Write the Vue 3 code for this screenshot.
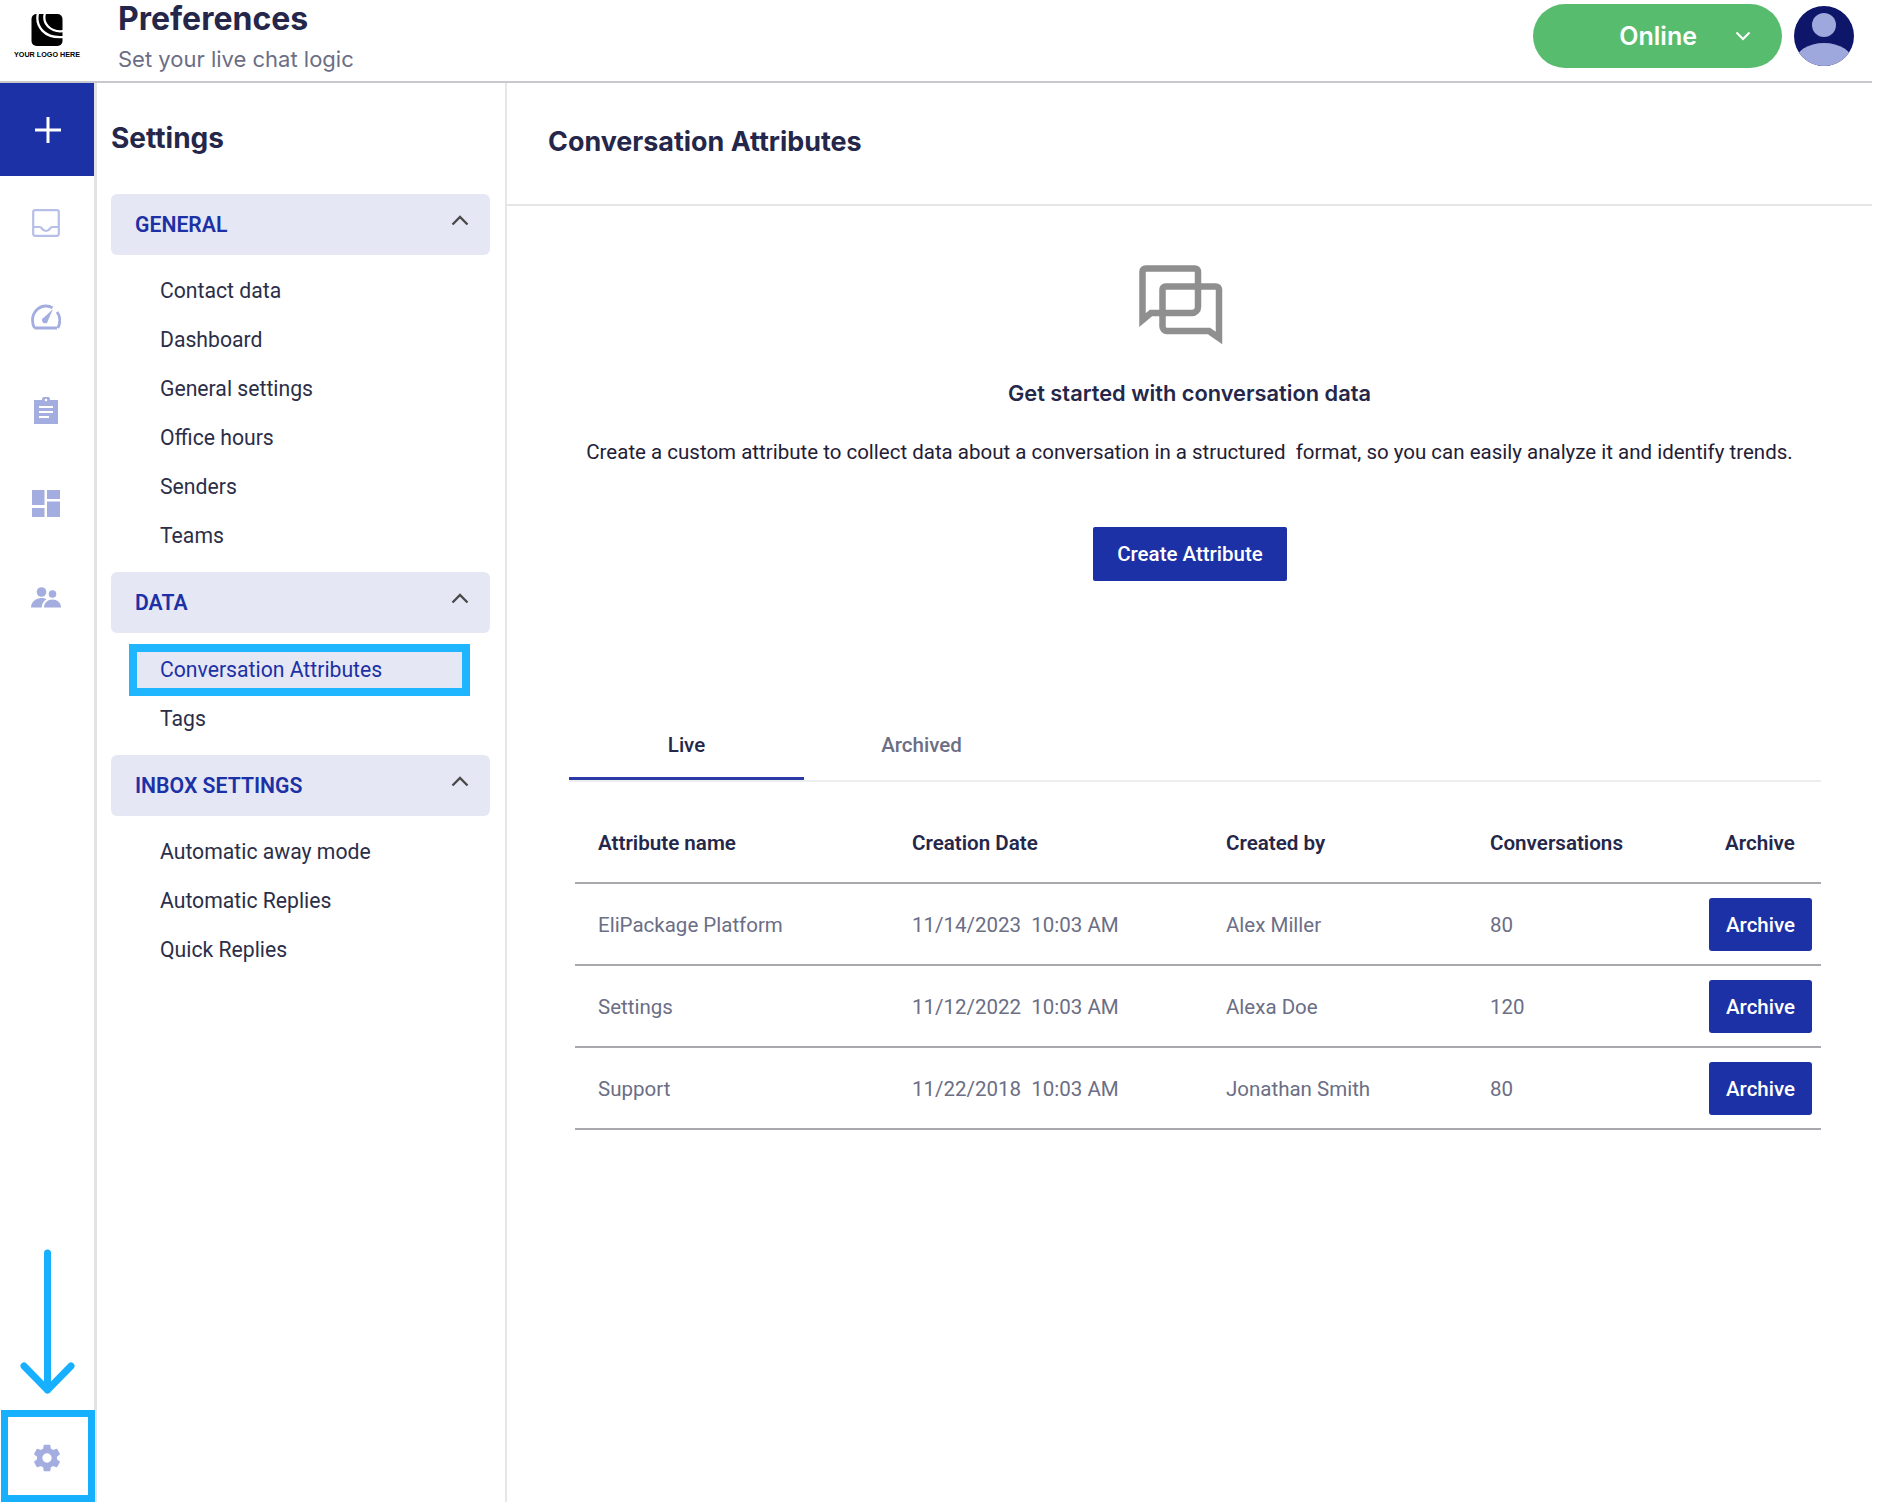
<script setup>
const railIcons = ['inbox', 'gauge', 'clip', 'dash', 'people']
const groups = [
  { title: 'GENERAL', items: ['Contact data', 'Dashboard', 'General settings', 'Office hours', 'Senders', 'Teams'] },
  { title: 'DATA', items: ['Conversation Attributes', 'Tags'] },
  { title: 'INBOX SETTINGS', items: ['Automatic away mode', 'Automatic Replies', 'Quick Replies'] }
]
const rows = [
  ['EliPackage Platform', '11/14/2023  10:03 AM', 'Alex Miller', '80'],
  ['Settings', '11/12/2022  10:03 AM', 'Alexa Doe', '120'],
  ['Support', '11/22/2018  10:03 AM', 'Jonathan Smith', '80']
]
</script>

<template>
  <div class="page">
    <header class="top">
      <div class="logo">
        <svg width="32" height="32" viewBox="0 0 32 32">
          <rect x="0.500" y="0" width="31" height="32" rx="5" fill="#000" />
          <path d="M7 -1 C4 12 13 25 33 23" fill="none" stroke="#fff" stroke-width="2.300" />
          <path d="M14 -1 C11 9 19 19 33 17" fill="none" stroke="#fff" stroke-width="2.300" />
        </svg>
        <span>YOUR LOGO HERE</span>
      </div>
      <div class="head-text">
        <h1>Preferences</h1>
        <p>Set your live chat logic</p>
      </div>
      <div class="status">
        <span>Online</span>
        <svg width="16" height="10" viewBox="0 0 16 10"><path d="M1.500 1.500 8 8l6.500-6.500" fill="none" stroke="#fff" stroke-width="2" /></svg>
      </div>
      <svg class="avatar" width="60" height="60" viewBox="0 0 60 60">
        <defs><clipPath id="av"><circle cx="30" cy="30" r="30" /></clipPath></defs>
        <g clip-path="url(#av)">
          <rect width="60" height="60" fill="#0d1669" />
          <circle cx="30" cy="19" r="12" fill="#9fa8dc" />
          <ellipse cx="30" cy="56" rx="29" ry="19" fill="#9fa8dc" />
        </g>
      </svg>
    </header>

    <div class="body">
      <nav class="rail">
        <button class="add" aria-label="Add">
          <svg width="28" height="28" viewBox="0 0 28 28"><path d="M14 1v26M1 14h26" stroke="#fff" stroke-width="3" /></svg>
        </button>
        <div v-for="i in railIcons" :key="i" class="rail-item">
          <svg v-if="i === 'inbox'" width="28" height="28" viewBox="0 0 28 28">
            <rect x="1.200" y="1.200" width="25.600" height="25.600" rx="2" fill="none" stroke="#b7bee8" stroke-width="2.200" />
            <path d="M2 18h6c2 0 2 4 6 4s4-4 6-4h6" fill="none" stroke="#b7bee8" stroke-width="2.200" />
          </svg>
          <svg v-else-if="i === 'gauge'" width="30" height="26" viewBox="0 0 30 26">
            <path d="M3.500 24C1.500 21 1.500 18 1.500 16 1.500 8 8 2 15 2c3 0 5 .8 6.500 1.800M26 8c2 2.500 2.800 5 2.800 8 0 3-.8 6-2 8M3.500 24H26" fill="none" stroke="#a4addf" stroke-width="2.800" />
            <path d="M22 5 17 16.500a3 3 0 1 1-4-3z" fill="#a4addf" />
          </svg>
          <svg v-else-if="i === 'clip'" width="24" height="27" viewBox="0 0 24 27">
            <path d="M0 3h8a4 4 0 0 1 8 0h8v24H0z" fill="#a4addf" />
            <path d="M5 10h14M5 15h14M5 20h10" stroke="#fff" stroke-width="2.200" />
            <circle cx="12" cy="3" r="1.300" fill="#fff" />
          </svg>
          <svg v-else-if="i === 'dash'" width="28" height="27" viewBox="0 0 28 27">
            <path d="M0 0h12.500v15H0zM15 0h13v9H15zM15 11.500h13V27H15zM0 18h12.500v9H0z" fill="#a4addf" />
          </svg>
          <svg v-else width="30" height="21" viewBox="0 0 30 21">
            <circle cx="10.500" cy="5" r="4.800" fill="#a4addf" />
            <circle cx="21.500" cy="7" r="3.800" fill="#a4addf" />
            <path d="M0 20.500C0 15 5 11 10.500 11c1.800 0 3.500.5 5 1.300-3 1.800-4.800 4.800-4.800 8.200z" fill="#a4addf" />
            <path d="M13 20.500c0-5 4-8 8.500-8s8.500 3 8.500 8z" fill="#a4addf" />
          </svg>
        </div>
        <div class="rail-space"></div>
        <svg class="arrow" width="60" height="146" viewBox="0 0 60 146">
          <path d="M29.500 4v137M6 117l23.500 24L53 117" fill="none" stroke="#17b0ff" stroke-width="7" stroke-linecap="round" stroke-linejoin="round" />
        </svg>
        <div class="gear-box">
          <svg width="32" height="32" viewBox="0 0 24 24">
            <path fill="#a4addf" d="M19.430 12.980c.04-.32.070-.64.070-.98s-.03-.66-.07-.98l2.110-1.650a.5.5 0 0 0 .12-.64l-2-3.460a.5.5 0 0 0-.61-.22l-2.490 1a7.300 7.300 0 0 0-1.690-.98l-.38-2.650A.49.49 0 0 0 14 2h-4a.49.49 0 0 0-.49.420l-.38 2.650c-.61.250-1.170.590-1.690.98l-2.490-1a.49.49 0 0 0-.61.220l-2 3.460a.49.49 0 0 0 .12.640l2.110 1.650c-.04.320-.07.650-.07.980s.03.660.07.980l-2.110 1.650a.5.5 0 0 0-.12.640l2 3.460c.12.220.39.300.61.220l2.490-1c.52.400 1.080.730 1.690.98l.38 2.650c.03.240.24.420.49.420h4c.25 0 .46-.18.49-.42l.38-2.650c.61-.25 1.170-.59 1.690-.98l2.490 1c.23.090.49 0 .61-.22l2-3.460a.5.5 0 0 0-.12-.64zM12 15.500a3.500 3.500 0 1 1 0-7 3.500 3.500 0 0 1 0 7z" />
          </svg>
        </div>
      </nav>

      <aside class="side">
        <h2>Settings</h2>
        <section v-for="g in groups" :key="g.title" class="group">
          <div class="group-head">
            <span>{{ g.title }}</span>
            <svg width="18" height="11" viewBox="0 0 18 11"><path d="M1.500 9.500 9 2l7.500 7.500" fill="none" stroke="#4a4a4a" stroke-width="2.400" /></svg>
          </div>
          <ul>
            <li v-for="it in g.items" :key="it" :class="{ active: it === 'Conversation Attributes' }">{{ it }}</li>
          </ul>
        </section>
      </aside>

      <main class="main">
        <div class="main-title"><h2>Conversation Attributes</h2></div>
        <div class="empty">
          <svg class="chat" width="84" height="82" viewBox="0 0 84 82">
            <path d="M3.500 55V6.500a3 3 0 0 1 3-3H56a3 3 0 0 1 3 3V42a6 6 0 0 1-6 6H12z" fill="none" stroke="#8f8f8f" stroke-width="6.500" />
            <path d="M26.500 21.500H77a3 3 0 0 1 3 3V73L70 66H28a4.500 4.500 0 0 1-4.500-4.500V24.500a3 3 0 0 1 3-3z" fill="none" stroke="#8f8f8f" stroke-width="6.500" />
          </svg>
          <h3>Get started with conversation data</h3>
          <p>Create a custom attribute to collect data about a conversation in a structured&nbsp; format, so you can easily analyze it and identify trends.</p>
          <button class="create">Create Attribute</button>
        </div>

        <div class="tabs">
          <div class="tab on">Live</div>
          <div class="tab">Archived</div>
        </div>

        <div class="table">
          <div class="tr th">
            <span>Attribute name</span><span>Creation Date</span><span>Created by</span><span>Conversations</span><span class="ac">Archive</span>
          </div>
          <div v-for="r in rows" :key="r[0]" class="tr td">
            <span v-for="c in r" :key="c">{{ c }}</span>
            <button class="arch">Archive</button>
          </div>
        </div>
      </main>
    </div>
  </div>
</template>

<style>
html, body { margin: 0; background: #fff; }
</style>

<style scoped>
.page {
  width: 1872px;
  height: 1502px;
  display: flex;
  flex-direction: column;
  overflow: hidden;
  font-family: Roboto, sans-serif;
  color: #25274a;
}
.top {
  height: 81px;
  flex: none;
  border-bottom: 2px solid #c9c9cd;
  display: flex;
  align-items: flex-start;
}
.logo {
  width: 94px;
  flex: none;
  display: flex;
  flex-direction: column;
  align-items: center;
  padding-top: 14px;
}
.logo span {
  font: 700 7.200px "Liberation Sans", sans-serif;
  color: #000;
  margin-top: 4px;
  white-space: nowrap;
}
.head-text {
  margin-left: 24px;
  font-family: Inter, sans-serif;
}
h1 {
  margin: 0;
  font-size: 32px;
  line-height: 38px;
  font-weight: 700;
  color: #25274a;
}
.head-text p {
  margin: 6px 0 0;
  font-size: 22px;
  line-height: 30px;
  color: #6b6e85;
}
.status {
  margin: 4px 0 0 auto;
  width: 249px;
  height: 64px;
  border-radius: 32px;
  background: #58bc6f;
  color: #fff;
  display: flex;
  align-items: center;
  justify-content: flex-end;
  padding-right: 31px;
  gap: 38px;
  box-sizing: border-box;
  font: 600 25px Inter, sans-serif;
}
.avatar {
  margin: 6px 18px 0 12px;
  flex: none;
}
.body {
  flex: 1;
  display: flex;
  min-height: 0;
}
.rail {
  width: 94px;
  flex: none;
  border-right: 3px solid #e3e3e3;
  display: flex;
  flex-direction: column;
  position: relative;
}
.add {
  height: 93px;
  background: #1c31a5;
  border: 0;
  padding: 0 0 0 1px;
  display: flex;
  align-items: center;
  justify-content: center;
}
.rail-item {
  height: 93.700px;
  padding-right: 2px;
  box-sizing: border-box;
  display: flex;
  align-items: center;
  justify-content: center;
  flex: none;
}
.rail-space { flex: 1; }
.arrow {
  position: absolute;
  left: 18px;
  bottom: 107px;
}
.gear-box {
  height: 92px;
  width: 94px;
  box-sizing: border-box;
  border: 7px solid #17b0ff;
  padding: 3px 3px 0 0;
  display: flex;
  align-items: center;
  justify-content: center;
  flex: none;
  position: relative;
  left: 1px;
}
.side {
  width: 379px;
  flex: none;
  border-right: 2px solid #e6e6e6;
  padding: 0 15px 0 14px;
}
.side h2 {
  margin: 36px 0 0;
  font: 700 28px/38px Inter, sans-serif;
  color: #25274a;
}
.group { margin-bottom: 12px; }
.group:first-of-type { margin-top: 37px; }
.group-head {
  height: 61px;
  background: #e5e7f4;
  border-radius: 6px;
  display: flex;
  align-items: center;
  justify-content: space-between;
  padding: 0 21px 0 24px;
  color: #1c31a5;
  font: 600 21.200px Roboto, sans-serif;
}
.group-head svg { margin-top: -8px; }
ul {
  list-style: none;
  margin: 0;
  padding: 11px 0 0;
}
li {
  height: 49px;
  line-height: 49px;
  padding-left: 49px;
  font-size: 21.200px;
  color: #2c2e48;
}
li.active {
  height: 52px;
  line-height: 36px;
  margin: 0 20px -2px 18px;
  padding-left: 23px;
  border: 8px solid #1fb6ff;
  box-sizing: border-box;
  background: #e5e7f4;
  color: #1c31a5;
}
.main {
  flex: 1;
  display: flex;
  flex-direction: column;
  min-width: 0;
}
.main-title {
  height: 121px;
  border-bottom: 2px solid #e6e6e6;
  padding-left: 41px;
  display: flex;
  align-items: center;
}
.main-title h2 {
  margin: 0 0 5px;
  font: 700 26.900px Inter, sans-serif;
  color: #25274a;
}
.empty {
  display: flex;
  flex-direction: column;
  align-items: center;
}
.chat { margin-top: 59px; margin-left: -18px; }
h3 {
  margin: 31px 0 0;
  font: 600 21.800px/30px Inter, sans-serif;
  color: #25274a;
}
.empty p {
  margin: 29px 0 0;
  font-size: 20.500px;
  line-height: 30px;
  color: #1f2036;
  white-space: nowrap;
}
.create {
  margin-top: 60px;
  margin-left: 1px;
  width: 194px;
  height: 54px;
  background: #1c31a5;
  color: #fff;
  border: 0;
  border-radius: 2px;
  font: 500 20.500px Roboto, sans-serif;
}
.tabs {
  margin: 135px 51px 0 62px;
  height: 64px;
  border-bottom: 2px solid #eceef0;
  display: flex;
}
.tab {
  width: 235px;
  text-align: center;
  font-size: 20.500px;
  line-height: 58px;
  color: #6b6e85;
  font-weight: 500;
}
.tab.on {
  color: #25274a;
  height: 61px;
  border-bottom: 3px solid #2b3aa6;
}
.table {
  margin: 0 51px 0 68px;
}
.tr {
  display: grid;
  grid-template-columns: 314px 314px 264px 1fr 112px;
  padding-left: 23px;
  align-items: center;
  border-bottom: 2px solid #a9a9ad;
}
.th {
  height: 78px;
  padding-top: 22px;
  font-size: 20.600px;
  font-weight: 600;
  color: #25274a;
}
.ac { padding-left: 16px; }
.td {
  height: 80px;
  font-size: 20.500px;
  color: #6b6e85;
  white-space: pre;
}
.td span { padding-top: 2px; }
.arch {
  width: 103px;
  height: 53px;
  background: #1c31a5;
  color: #fff;
  border: 0;
  border-radius: 3px;
  font: 500 20.500px Roboto, sans-serif;
  padding: 2px 0 0;
}
</style>
